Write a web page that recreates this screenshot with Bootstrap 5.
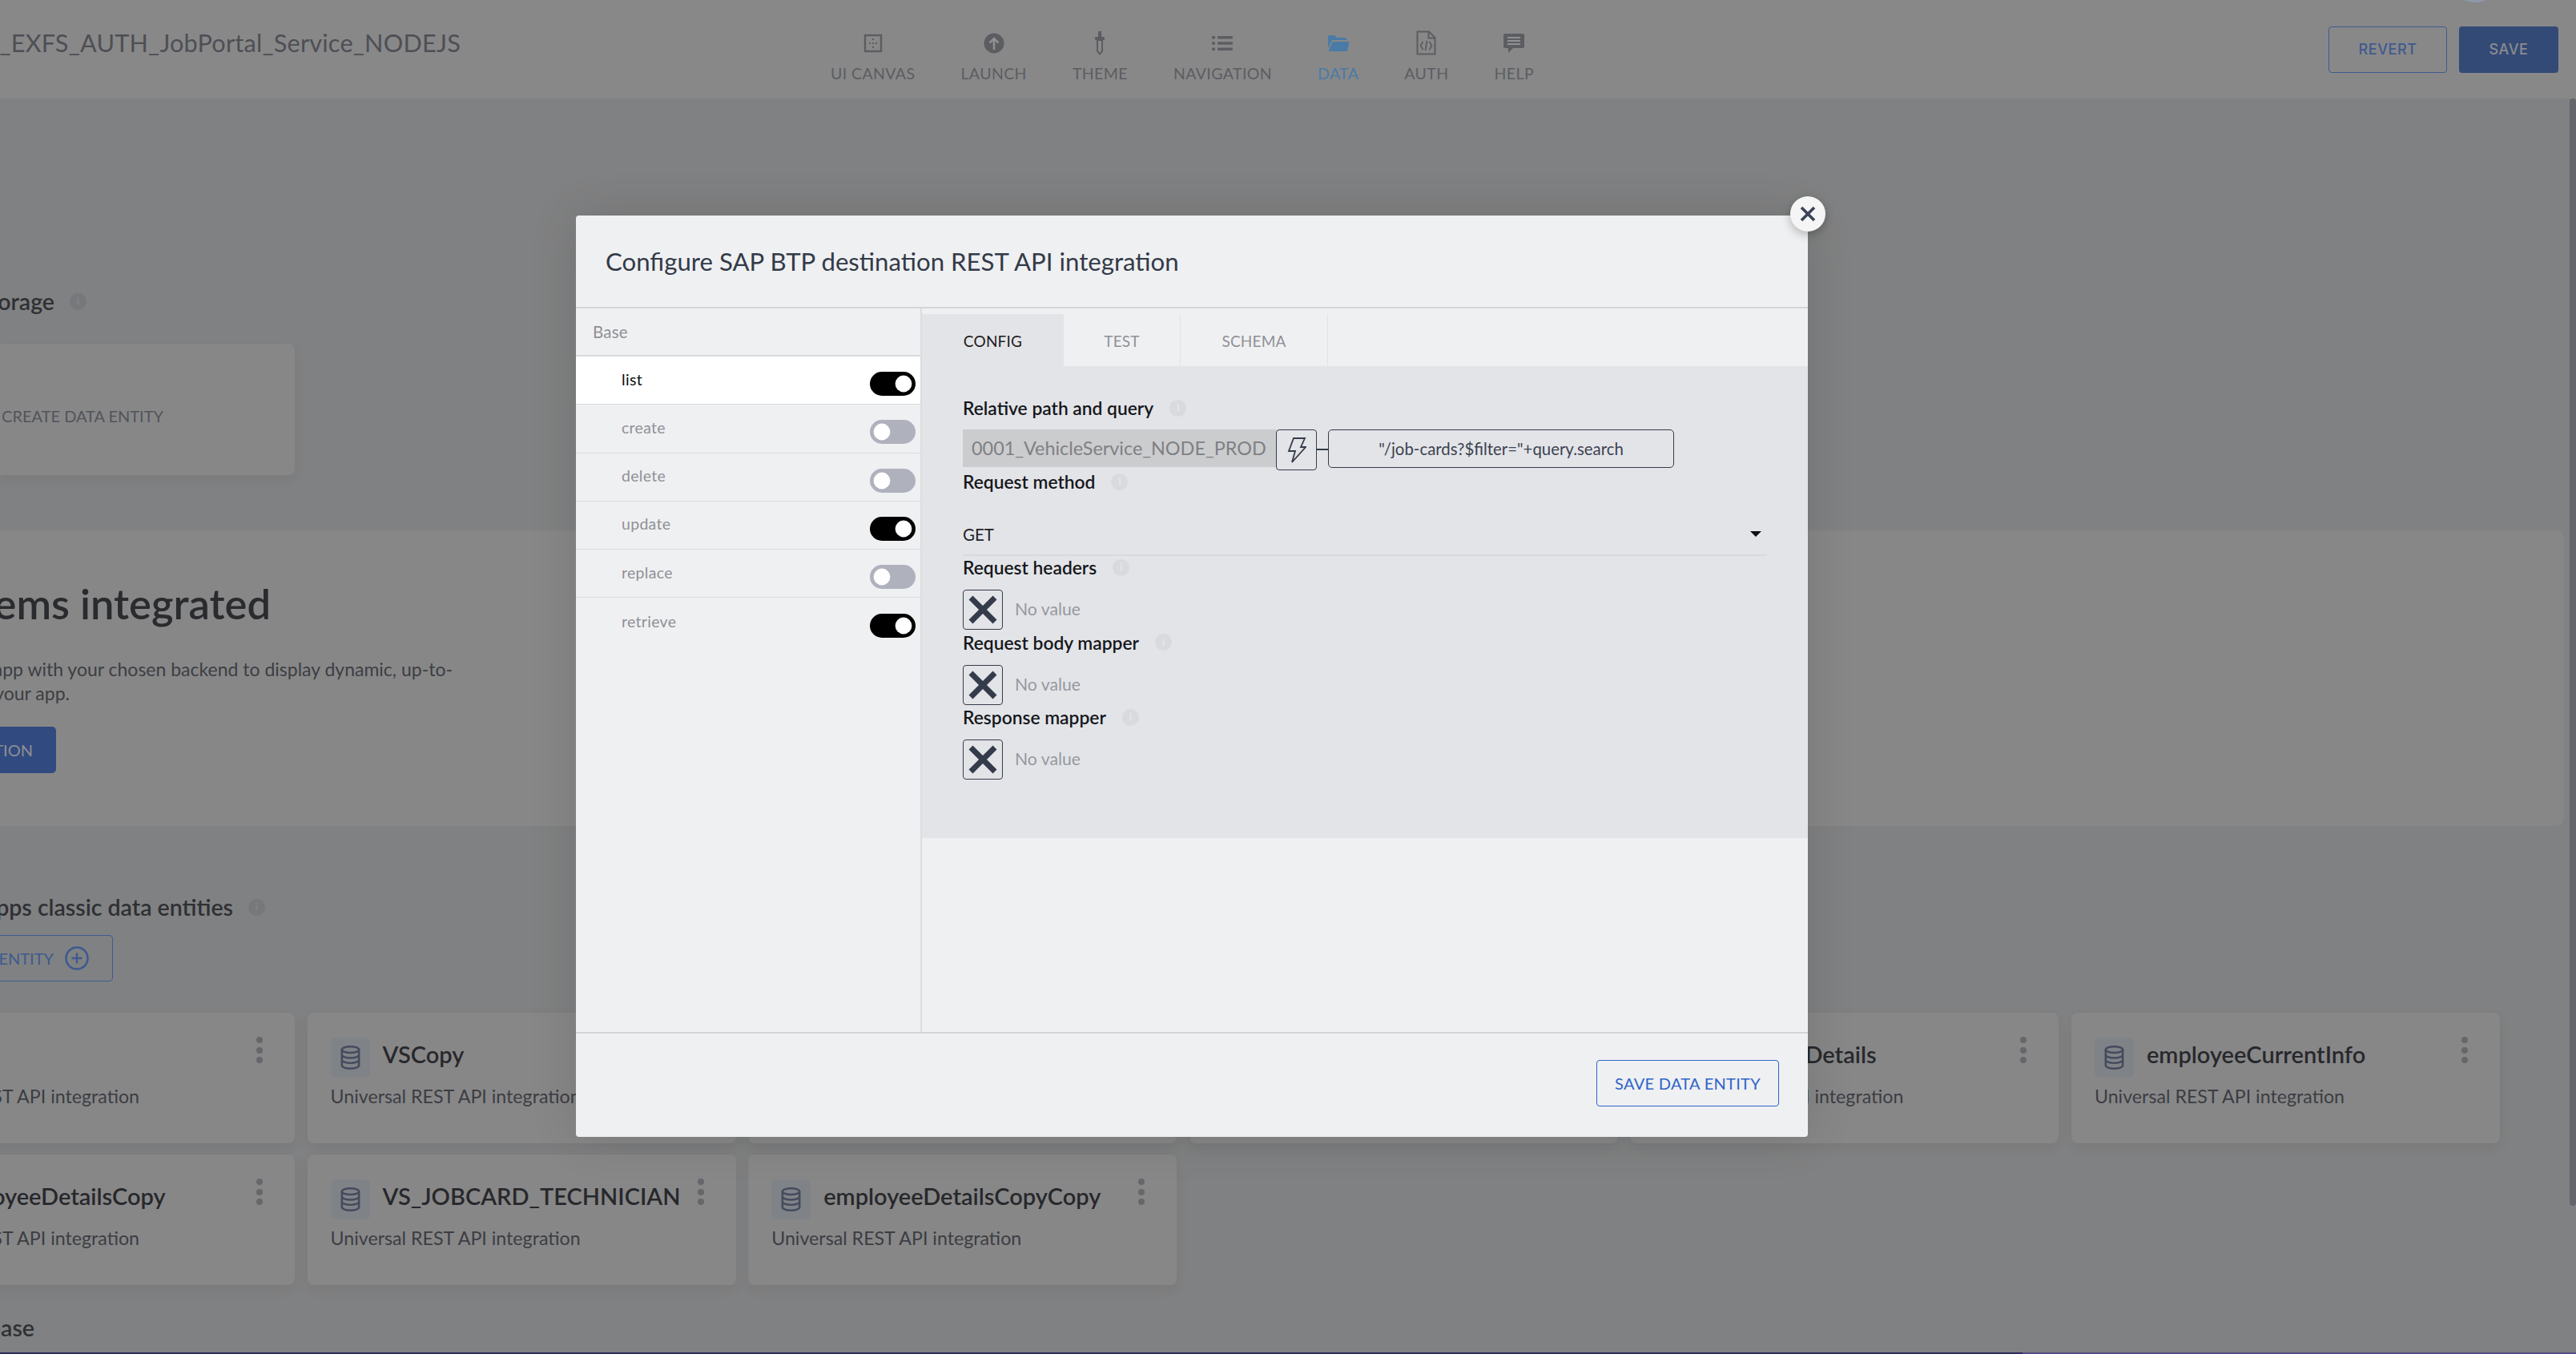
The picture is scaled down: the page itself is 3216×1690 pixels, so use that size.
<!DOCTYPE html>
<html lang="en">
<head>
<meta charset="utf-8">
<title>Configure data entity</title>
<link href="https://cdn.jsdelivr.net/npm/bootstrap@5.3.0/dist/css/bootstrap.min.css" rel="stylesheet">
<script src="https://cdn.jsdelivr.net/npm/bootstrap@5.3.0/dist/js/bootstrap.bundle.min.js"></script>
<style>
html,body{height:1690px;overflow:hidden}
body{background:#808182;font-family:Lato,"Noto Sans",sans-serif;color:#2a2b2e;position:relative}
.topbar{height:123px;background:#888889;padding:0 22px 0 0;flex-wrap:nowrap;align-items:center}
.clipline{display:flex;justify-content:flex-end;white-space:nowrap;overflow:hidden}
.apptitle{width:575px;font-size:30.7px;color:#4e4f54;margin-bottom:14px;letter-spacing:.2px}
.topnav{margin-left:462px;gap:57px;flex-wrap:nowrap}
.navitem{display:flex;flex-direction:column;align-items:center;color:#5c5d61;font-size:19.5px;letter-spacing:.4px;line-height:24px}
.navitem.on{color:#4a7aa6}
.navicon{height:44px;display:flex;align-items:center;justify-content:center;margin-bottom:4px;margin-top:12px}
.topbtn{height:58px;font:500 18px Inter,sans-serif;letter-spacing:.6px;border-radius:4px;padding:0;display:flex;align-items:center;justify-content:center}
.revert{width:148px;margin-right:15px;color:#3f5a8e;border:1.5px solid #3f5a8e;background:transparent}
.savebtn{width:124px;color:#8b8c90;background:#334a76;border:0}
.avatar{position:absolute;left:3068px;top:-24px;width:44px;height:27px;border-radius:50%;background:#8d98a8}
.sechead{font-size:28.5px;font-weight:600;line-height:32px;color:#2f3034}
.infodot{width:21px;height:21px;border-radius:50%;display:inline-flex;align-items:center;justify-content:center;font:700 14px "Liberation Serif",serif;flex:none}
.infodot.dim{background:#77787b;color:#828285}
.h1row{margin-top:237px;height:32px;display:flex;align-items:center}
.h1txt{width:68px}
.h1row .infodot{margin-left:19px}
.blankcard{width:368px;height:164px;margin-top:37px;background:#878788;border:0;border-radius:0 8px 8px 0;box-shadow:0 6px 16px rgba(0,0,0,.05);flex-direction:row;align-items:center}
.blanktxt{width:204px;margin-top:16px;color:#53545a;font-size:20px}
.band{width:3201px;height:369px;margin-top:69px;background:#878788;border-radius:0 10px 10px 0;padding-top:61px}
.bandtitle{width:338px;font-size:52.5px;font-weight:600;line-height:60px;color:#2a2b2e}
.bandline{font-size:23px;line-height:29.5px;color:#3d3e42}
.bl1{width:565px;margin-top:38px}
.bl2{width:87px}
.bandbtn{width:70px;height:58px;margin-top:27px;background:#314a80;border:0;border-radius:0 5px 5px 0;color:#8d8f93;font-size:20px;display:flex;align-items:center;justify-content:flex-end;padding:0 29px 0 0;white-space:nowrap;overflow:hidden}
.h2row{margin-top:85px;height:32px;display:flex;align-items:center}
.h2txt{width:291px}
.h2row .infodot{margin-left:19px}
.entitybtn{width:141px;height:58px;margin-top:19px;border:1.5px solid #3d5a90;border-left:0;border-radius:0 5px 5px 0;background:transparent;color:#3d5a90;font-size:20px;padding:0 29px 0 0;display:flex;align-items:center;justify-content:flex-end;gap:14px;white-space:nowrap;overflow:hidden}
.entitybtn span,.entitybtn svg{flex:none}
.entgrid{display:grid;grid-template-columns:repeat(6,535px);column-gap:15.6px;row-gap:14.5px;margin:39px 0 0 -167px;width:3400px}
.ecard{height:162.5px;background:#878788;border:0;border-radius:8px;box-shadow:0 6px 16px rgba(0,0,0,.06);position:relative;padding:31px 29px 0}
.etitle{font-size:29px;font-weight:600;color:#27282b;line-height:50px;margin:-4px 0 0 16px;white-space:nowrap}
.etile{width:49px;height:50px;border-radius:6px;background:#7f8388;display:flex;align-items:center;justify-content:center;flex:none}
.esub{font-size:23.2px;color:#3c3d42;line-height:30px;margin-top:8px;white-space:nowrap}
.kebab{position:absolute;right:40px;top:30px;display:flex;flex-direction:column;gap:4.5px}
.kebab i{display:block;width:8px;height:8px;border-radius:50%;background:#66676b}
.h3row{margin-top:37px}
.h3txt{width:43px}
.footbar{position:absolute;left:0;right:0;bottom:0;height:2px;background:linear-gradient(90deg,#2d2a5a 0,#2d2a5a 2525px,#544f86 2525px,#544f86 100%)}
.thumb{position:absolute;right:0;top:123px;width:8px;height:1382px;background:#65666b;border-radius:4px}
.dlg{position:absolute;left:719px;top:269px;width:1538px;height:1150px;background:#eff0f2;border:0;border-radius:4px;box-shadow:0 0 60px rgba(0,0,0,.12);color:#2f3542;z-index:5}
.dlghead{height:116px;padding:0 0 0 37px;border-bottom:2px solid #d4d5d8;border-radius:0}
.dlgtitle{font-size:31.2px;font-weight:400;line-height:40px;color:#333a48;margin-top:-1px}
.closer{position:absolute;right:-22px;top:-24px;width:44px;height:44px;border-radius:50%;background:#f5f5f6;border:0;padding:0;box-shadow:0 4px 12px rgba(0,0,0,.25);display:flex;align-items:center;justify-content:center;z-index:2}
.dlgbody{flex:1 1 auto;min-height:0;padding:0}
.side{width:432px;border-right:2px solid #dcdde0;flex:none}
.basehead{height:60px;padding:0 21px;line-height:59px;font-size:20.5px;color:#8f9096;border-bottom:2px solid #d9dadd;letter-spacing:.2px}
.oprow{height:60.3px;background:transparent;border:0;border-bottom:2px solid #dadbde;border-radius:0!important;padding:0 6px 0 57px;display:flex;align-items:center;justify-content:space-between;font-size:19.5px;color:#8f9096;letter-spacing:.3px}
.oprow.on{background:#fff;color:#111}
.oprow span{margin-top:-3px}
.form-switch.swt{padding:0;margin:0;min-height:0;height:30px;margin-top:9px}
.form-switch .tgl.form-check-input,.form-switch .tgl.form-check-input:checked,.form-switch .tgl.form-check-input:focus{--bs-form-switch-bg:url("data:image/svg+xml,%3csvg xmlns='http://www.w3.org/2000/svg' viewBox='-4 -4 8 8'%3e%3ccircle r='3.2' fill='%23fff'/%3e%3c/svg%3e");width:57px;height:30px;margin:0;border-radius:15px;box-shadow:none}
.form-switch .tgl.form-check-input{background-color:#afb1bd;border:2px solid #afb1bd}
.form-switch .tgl.form-check-input:checked{background-color:#000;border-color:#000}
.rightcol{flex:1 1 auto;min-width:0}
.tabstrip{height:72px;padding-top:7px;flex-wrap:nowrap;margin:0}
.tabitem{height:65px;display:flex;align-items:center;font-size:19px;color:#8f9096;border-right:1px solid #e2e3e6;padding:4px 0 0;justify-content:center;letter-spacing:.2px;background:transparent;border-radius:0}
.tabitem.on{background:#e3e4e8;color:#1c1d20;border-right:0}
.tw1{width:177px}
.tw2{width:146px}
.tw3{width:184px}
.panel{height:589px;background:#e3e4e8;padding:38px 51px 0}
.flabel{height:28px;display:flex;align-items:center;font-size:22.8px;font-weight:600;color:#15171b;line-height:28px}
.flabel .infodot{margin-left:20px;background:#d9dade;color:#e4e5e9}
.pathrow{display:flex;align-items:flex-start;margin-top:13px;height:51px}
.destfield{width:391px;height:47px;background:#cbccce;color:#7f8084;font-size:23.4px;line-height:47px;padding-left:11px;white-space:nowrap;overflow:hidden}
.boltbtn{width:51px;height:51px;border:1.5px solid #343b4a;border-radius:4px;padding:0;background:transparent;display:flex;align-items:center;justify-content:center}
.joiner{width:14px;height:1.5px;background:#343b4a;margin-top:24px}
.exprbox{width:432px;height:48px;border:1.5px solid #343b4a;border-radius:5px;text-align:center;line-height:46px;font-size:20.4px;color:#3b4250}
.selectrow{height:79px;width:1004px;border-bottom:2px solid #d8d9dd;display:flex;align-items:flex-end;justify-content:space-between;padding:0 7px 14px 0;font-size:20.5px;color:#1f2126;line-height:22px}
.caretmark{width:0;height:0;border-left:7px solid transparent;border-right:7px solid transparent;border-top:7px solid #111;margin-bottom:8px}
.group{margin-bottom:1.5px}
.noval{display:flex;align-items:center;margin-top:14px;height:50px;color:#96989f;font-size:21.2px;gap:15px}
.xbox{width:50px;height:50px;border:1.5px solid #343b4a;border-radius:4px;padding:0;background:transparent;display:flex;align-items:center;justify-content:center}
.dlgfoot{height:131px;flex:none;padding:0 36px 0 0;border-top:2px solid #d4d5d8;border-radius:0;justify-content:flex-end;align-items:center;margin-top:0}
.savedata{width:228px;height:58px;border:1.5px solid #2e64c8;border-radius:4px;background:transparent;color:#2e64c8;font-size:20px;padding:0;letter-spacing:.3px;margin:-5px 0 0!important}
</style>
</head>
<body>
<nav class="navbar topbar">
  <div class="clipline apptitle"><span>SAP_EXFS_AUTH_JobPortal_Service_NODEJS</span></div>
  <div class="nav topnav">
    <div class="navitem"><div class="navicon"><svg width="24" height="24" viewBox="0 0 24 24"><rect x="2" y="2" width="20" height="20" fill="none" stroke="#5c5d61" stroke-width="2.4"/><g fill="#5c5d61"><rect x="11" y="6" width="2" height="2"/><rect x="7" y="11" width="2" height="2"/><rect x="11" y="11" width="2" height="2"/><rect x="15" y="11" width="2" height="2"/><rect x="11" y="16" width="2" height="2"/></g></svg></div>UI CANVAS</div>
    <div class="navitem"><div class="navicon"><svg width="26" height="26" viewBox="0 0 26 26"><circle cx="13" cy="13" r="12.5" fill="#5c5d61"/><path d="M13 21V7M7.5 12.5 13 7l5.5 5.5" fill="none" stroke="#8f9092" stroke-width="2.6"/></svg></div>LAUNCH</div>
    <div class="navitem"><div class="navicon"><svg width="16" height="30" viewBox="0 0 16 30"><path d="M6 0h4v7h4v4h-2v14l-4 5-4-5V11H2V7h4z" fill="#5c5d61"/><path d="M6 12h4v12l-2 3-2-3z" fill="#8a8a8c"/></svg></div>THEME</div>
    <div class="navitem"><div class="navicon"><svg width="26" height="20" viewBox="0 0 26 20" fill="#5c5d61"><rect x="0" y="1" width="4" height="3.4" rx="1"/><rect x="7" y="1" width="19" height="3.4" rx="1"/><rect x="0" y="8.3" width="4" height="3.4" rx="1"/><rect x="7" y="8.3" width="19" height="3.4" rx="1"/><rect x="0" y="15.6" width="4" height="3.4" rx="1"/><rect x="7" y="15.6" width="19" height="3.4" rx="1"/></svg></div>NAVIGATION</div>
    <div class="navitem on"><div class="navicon"><svg width="28" height="22" viewBox="0 0 28 22"><path d="M1 3a2 2 0 0 1 2-2h6l3 3h10a2 2 0 0 1 2 2v1H6L1 17z" fill="#4a7aa6"/><path d="M6.500 9H27.500L25 21H1.500z" fill="#4a7aa6"/></svg></div>DATA</div>
    <div class="navitem"><div class="navicon"><svg width="25" height="31" viewBox="0 0 25 31" fill="none" stroke="#5c5d61" stroke-width="2"><path d="M1.500 1.500H16L23.500 9v20.500h-22z"/><path d="M15.500 1.500V9.500h8"/><path d="M8.500 14l-3 5 3 5M16.500 14l3 5-3 5M13.500 13l-2 12" stroke-width="1.800"/></svg></div>AUTH</div>
    <div class="navitem"><div class="navicon"><svg width="26" height="24" viewBox="0 0 26 24"><path d="M2 0h22a2 2 0 0 1 2 2v14a2 2 0 0 1-2 2H12l-6 6v-6H2a2 2 0 0 1-2-2V2a2 2 0 0 1 2-2z" fill="#5c5d61"/><path d="M5 5h16M5 9h16M5 13h16" stroke="#8f9092" stroke-width="1.800"/></svg></div>HELP</div>
  </div>
  <div class="d-flex ms-auto">
    <button class="btn topbtn revert" type="button">REVERT</button>
    <button class="btn topbtn savebtn" type="button">SAVE</button>
  </div>
  <div class="avatar"></div>
</nav>

<main>
  <div class="h1row sechead"><div class="clipline h1txt"><span>Cloud file storage</span></div><span class="infodot dim">i</span></div>
  <div class="card blankcard"><div class="clipline blanktxt"><span>CREATE DATA ENTITY</span></div></div>

  <section class="band">
    <div class="clipline bandtitle"><span>Backend systems integrated</span></div>
    <div class="clipline bandline bl1"><span>Connect your app with your chosen backend to display dynamic, up-to-</span></div>
    <div class="clipline bandline bl2"><span>date data in your app.</span></div>
    <button class="btn bandbtn" type="button">ADD INTEGRATION</button>
  </section>

  <div class="h2row sechead"><div class="clipline h2txt"><span>Cloud Foundry apps classic data entities</span></div><span class="infodot dim">i</span></div>
  <button class="btn entitybtn" type="button"><span>ADD DATA ENTITY</span><svg width="30" height="30" viewBox="0 0 30 30"><circle cx="15" cy="15" r="13.500" fill="none" stroke="#3d5a90" stroke-width="2.600"/><path d="M15 8.500v13M8.500 15h13" stroke="#3d5a90" stroke-width="2.400"/></svg></button>

  <div class="entgrid">
    <div class="card ecard"><div class="d-flex"><div class="etile"><svg width="25" height="30" viewBox="0 0 27 35" preserveAspectRatio="none" fill="none" stroke="#454b5c" stroke-width="2.800"><ellipse cx="13.500" cy="6" rx="11.500" ry="4.500"/><path d="M2 6v23c0 2.500 5 4.500 11.500 4.500S25 31.500 25 29V6M2 13.500c0 2.500 5 4.500 11.500 4.500S25 16 25 13.500M2 21c0 2.500 5 4.500 11.500 4.500S25 23.500 25 21"/></svg></div><div class="etitle">VS</div></div><div class="esub">Universal REST API integration</div><div class="kebab"><i></i><i></i><i></i></div></div>
    <div class="card ecard"><div class="d-flex"><div class="etile"><svg width="25" height="30" viewBox="0 0 27 35" preserveAspectRatio="none" fill="none" stroke="#454b5c" stroke-width="2.800"><ellipse cx="13.500" cy="6" rx="11.500" ry="4.500"/><path d="M2 6v23c0 2.500 5 4.500 11.500 4.500S25 31.500 25 29V6M2 13.500c0 2.500 5 4.500 11.500 4.500S25 16 25 13.500M2 21c0 2.500 5 4.500 11.500 4.500S25 23.500 25 21"/></svg></div><div class="etitle">VSCopy</div></div><div class="esub">Universal REST API integration</div><div class="kebab"><i></i><i></i><i></i></div></div>
    <div class="card ecard"></div>
    <div class="card ecard"></div>
    <div class="card ecard"><div class="d-flex"><div class="etile"><svg width="25" height="30" viewBox="0 0 27 35" preserveAspectRatio="none" fill="none" stroke="#454b5c" stroke-width="2.800"><ellipse cx="13.500" cy="6" rx="11.500" ry="4.500"/><path d="M2 6v23c0 2.500 5 4.500 11.500 4.500S25 31.500 25 29V6M2 13.500c0 2.500 5 4.500 11.500 4.500S25 16 25 13.500M2 21c0 2.500 5 4.500 11.500 4.500S25 23.500 25 21"/></svg></div><div class="etitle">employeeDetails</div></div><div class="esub">Universal REST API integration</div><div class="kebab"><i></i><i></i><i></i></div></div>
    <div class="card ecard"><div class="d-flex"><div class="etile"><svg width="25" height="30" viewBox="0 0 27 35" preserveAspectRatio="none" fill="none" stroke="#454b5c" stroke-width="2.800"><ellipse cx="13.500" cy="6" rx="11.500" ry="4.500"/><path d="M2 6v23c0 2.500 5 4.500 11.500 4.500S25 31.500 25 29V6M2 13.500c0 2.500 5 4.500 11.500 4.500S25 16 25 13.500M2 21c0 2.500 5 4.500 11.500 4.500S25 23.500 25 21"/></svg></div><div class="etitle">employeeCurrentInfo</div></div><div class="esub">Universal REST API integration</div><div class="kebab"><i></i><i></i><i></i></div></div>
    <div class="card ecard"><div class="d-flex"><div class="etile"><svg width="25" height="30" viewBox="0 0 27 35" preserveAspectRatio="none" fill="none" stroke="#454b5c" stroke-width="2.800"><ellipse cx="13.500" cy="6" rx="11.500" ry="4.500"/><path d="M2 6v23c0 2.500 5 4.500 11.500 4.500S25 31.500 25 29V6M2 13.500c0 2.500 5 4.500 11.500 4.500S25 16 25 13.500M2 21c0 2.500 5 4.500 11.500 4.500S25 23.500 25 21"/></svg></div><div class="etitle">employeeDetailsCopy</div></div><div class="esub">Universal REST API integration</div><div class="kebab"><i></i><i></i><i></i></div></div>
    <div class="card ecard"><div class="d-flex"><div class="etile"><svg width="25" height="30" viewBox="0 0 27 35" preserveAspectRatio="none" fill="none" stroke="#454b5c" stroke-width="2.800"><ellipse cx="13.500" cy="6" rx="11.500" ry="4.500"/><path d="M2 6v23c0 2.500 5 4.500 11.500 4.500S25 31.500 25 29V6M2 13.500c0 2.500 5 4.500 11.500 4.500S25 16 25 13.500M2 21c0 2.500 5 4.500 11.500 4.500S25 23.500 25 21"/></svg></div><div class="etitle">VS_JOBCARD_TECHNICIAN</div></div><div class="esub">Universal REST API integration</div><div class="kebab"><i></i><i></i><i></i></div></div>
    <div class="card ecard"><div class="d-flex"><div class="etile"><svg width="25" height="30" viewBox="0 0 27 35" preserveAspectRatio="none" fill="none" stroke="#454b5c" stroke-width="2.800"><ellipse cx="13.500" cy="6" rx="11.500" ry="4.500"/><path d="M2 6v23c0 2.500 5 4.500 11.500 4.500S25 31.500 25 29V6M2 13.500c0 2.500 5 4.500 11.500 4.500S25 16 25 13.500M2 21c0 2.500 5 4.500 11.500 4.500S25 23.500 25 21"/></svg></div><div class="etitle">employeeDetailsCopyCopy</div></div><div class="esub">Universal REST API integration</div><div class="kebab"><i></i><i></i><i></i></div></div>
  </div>

  <div class="h3row sechead"><div class="clipline h3txt"><span>Database</span></div></div>
</main>

<div class="footbar"></div>
<div class="thumb"></div>

<div class="modal-content dlg" role="dialog">
  <button class="closer" type="button" aria-label="Close"><svg width="22" height="22" viewBox="0 0 22 22"><path d="M3 3l16 16M19 3 3 19" stroke="#3a4256" stroke-width="3.600"/></svg></button>
  <div class="modal-header dlghead"><h5 class="modal-title dlgtitle">Configure SAP BTP destination REST API integration</h5></div>
  <div class="modal-body dlgbody d-flex">
    <aside class="side">
      <div class="basehead">Base</div>
      <div class="list-group list-group-flush">
        <div class="list-group-item oprow on"><span>list</span><div class="form-check form-switch swt"><input class="form-check-input tgl" type="checkbox" checked aria-label="list"></div></div>
        <div class="list-group-item oprow"><span>create</span><div class="form-check form-switch swt"><input class="form-check-input tgl" type="checkbox" aria-label="create"></div></div>
        <div class="list-group-item oprow"><span>delete</span><div class="form-check form-switch swt"><input class="form-check-input tgl" type="checkbox" aria-label="delete"></div></div>
        <div class="list-group-item oprow"><span>update</span><div class="form-check form-switch swt"><input class="form-check-input tgl" type="checkbox" checked aria-label="update"></div></div>
        <div class="list-group-item oprow"><span>replace</span><div class="form-check form-switch swt"><input class="form-check-input tgl" type="checkbox" aria-label="replace"></div></div>
        <div class="list-group-item oprow"><span>retrieve</span><div class="form-check form-switch swt"><input class="form-check-input tgl" type="checkbox" checked aria-label="retrieve"></div></div>
      </div>
    </aside>
    <div class="rightcol">
      <div class="nav tabstrip">
        <div class="tabitem tw1 on">CONFIG</div>
        <div class="tabitem tw2">TEST</div>
        <div class="tabitem tw3">SCHEMA</div>
      </div>
      <div class="panel">
        <div class="flabel">Relative path and query<span class="infodot">i</span></div>
        <div class="pathrow">
          <div class="destfield">0001_VehicleService_NODE_PROD</div>
          <button class="boltbtn" type="button" aria-label="Bind"><svg width="24" height="32" viewBox="0 0 24 32" fill="none" stroke="#343b4a" stroke-width="1.800"><path d="M8 1h14l-5 11h6L6 31l4-14H2z"/></svg></button>
          <div class="joiner"></div>
          <div class="exprbox">"/job-cards?$filter="+query.search</div>
        </div>
        <div class="flabel">Request method<span class="infodot">i</span></div>
        <div class="selectrow"><span>GET</span><span class="caretmark"></span></div>
        <div class="group mt-0">
          <div class="flabel">Request headers<span class="infodot">i</span></div>
          <div class="noval"><button class="xbox" type="button" aria-label="Clear"><svg width="38" height="38" viewBox="0 0 38 38"><path d="M4 4l30 30M34 4 4 34" stroke="#343b4a" stroke-width="7"/></svg></button><span>No value</span></div>
        </div>
        <div class="group">
          <div class="flabel">Request body mapper<span class="infodot">i</span></div>
          <div class="noval"><button class="xbox" type="button" aria-label="Clear"><svg width="38" height="38" viewBox="0 0 38 38"><path d="M4 4l30 30M34 4 4 34" stroke="#343b4a" stroke-width="7"/></svg></button><span>No value</span></div>
        </div>
        <div class="group">
          <div class="flabel">Response mapper<span class="infodot">i</span></div>
          <div class="noval"><button class="xbox" type="button" aria-label="Clear"><svg width="38" height="38" viewBox="0 0 38 38"><path d="M4 4l30 30M34 4 4 34" stroke="#343b4a" stroke-width="7"/></svg></button><span>No value</span></div>
        </div>
      </div>
    </div>
  </div>
  <div class="modal-footer dlgfoot"><button class="btn savedata" type="button">SAVE DATA ENTITY</button></div>
</div>
</body>
</html>
